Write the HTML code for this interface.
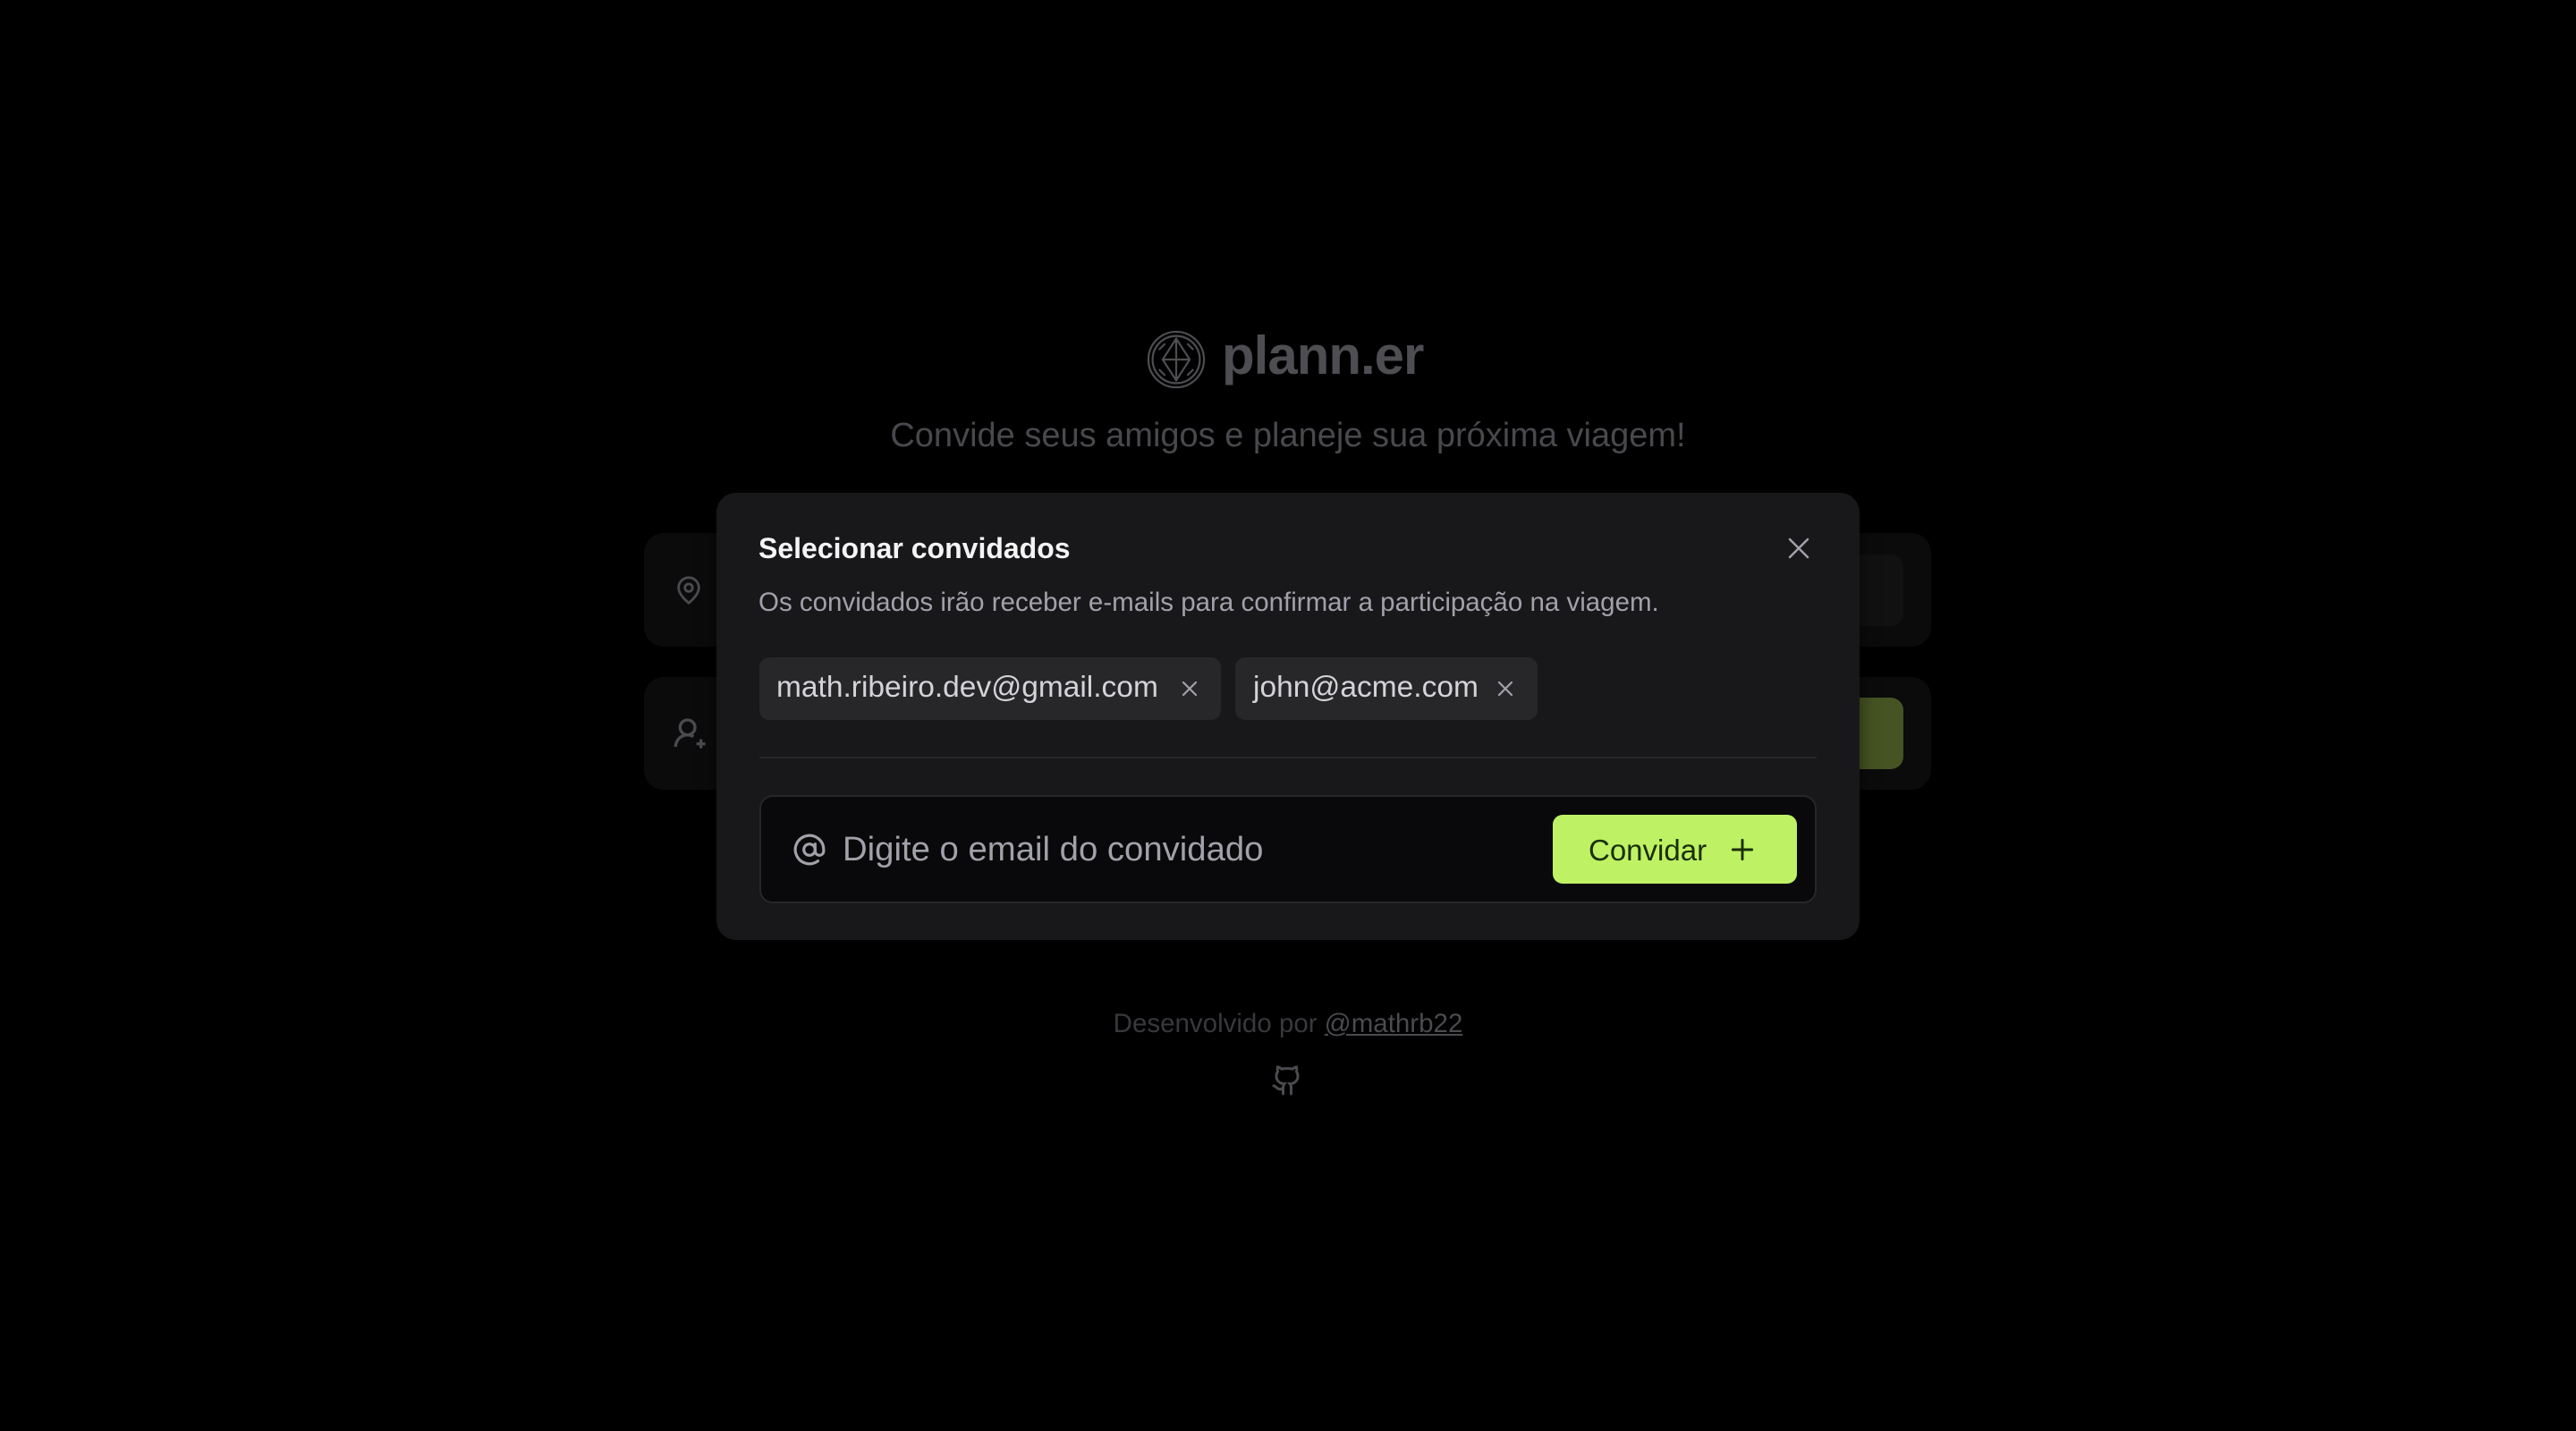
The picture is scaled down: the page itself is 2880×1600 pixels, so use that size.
<!DOCTYPE html>
<html><head><meta charset="utf-8"><style>
*{margin:0;padding:0;box-sizing:border-box}
body{width:2880px;height:1600px;background:#000;position:relative;overflow:hidden;font-family:"Liberation Sans",sans-serif}
.a{position:absolute}
</style></head><body>
<!-- background -->
<svg class="a" style="left:1282px;top:369px" width="66" height="66" viewBox="0 0 24 24" fill="none" stroke="#4d4d52" stroke-width="0.8">
<circle cx="12" cy="12" r="11.3"/><circle cx="12" cy="12" r="9.6"/>
<path d="M12 3.5L17.5 12L12 20.5L6.5 12Z M6.5 12H17.5 M12 3.5V20.5 M5 8L7.5 5.5 M19 8L16.5 5.5 M5 16L7.5 18.5 M19 16L16.5 18.5"/>
</svg>
<div class="a" style="left:1366px;top:363px;font-size:60px;font-weight:bold;color:#4d4d52;letter-spacing:-1px">plann.er</div>
<div class="a" style="left:0;width:2880px;top:466px;text-align:center;font-size:38px;color:#48484d">Convide seus amigos e planeje sua próxima viagem!</div>

<div class="a" style="left:720px;top:596px;width:1439px;height:127px;background:#0b0b0c;border-radius:22px"></div>
<div class="a" style="left:720px;top:757px;width:1439px;height:126px;background:#0b0b0c;border-radius:22px"></div>
<div class="a" style="left:2060px;top:620px;width:68px;height:80px;background:#111112;border-radius:14px"></div>
<div class="a" style="left:2060px;top:780px;width:68px;height:80px;background:#465323;border-radius:14px"></div>
<svg class="a" style="left:753px;top:640px" width="34" height="40" viewBox="0 0 24 24" fill="none" stroke="#4a4a4f" stroke-width="2"><path d="M20 10c0 6-8 12-8 12s-8-6-8-12a8 8 0 0 1 16 0Z"/><circle cx="12" cy="10" r="3"/></svg>
<svg class="a" style="left:752px;top:800px" width="40" height="40" viewBox="0 0 24 24" fill="none" stroke="#4a4a4f" stroke-width="2"><circle cx="10" cy="8" r="5"/><path d="M2 21a8 8 0 0 1 12-6.9 M19 16v6 M16 19h6"/></svg>

<div class="a" style="left:0;width:2880px;top:1128px;text-align:center;font-size:29.5px;color:#38383d">Desenvolvido por <span style="text-decoration:underline;color:#4a4a4f">@mathrb22</span></div>
<svg class="a" style="left:1421px;top:1190px" width="36" height="36" viewBox="0 0 24 24" fill="none" stroke="#4a4a4f" stroke-width="2" stroke-linecap="round"><path d="M15 22v-4a4.8 4.8 0 0 0-1-3.5c3 0 6-2 6-5.5.1-1.3-.3-2.5-1-3.5.3-1.2.3-2.4 0-3.5 0 0-1 0-3 1.5-2.6-.5-5.4-.5-8 0C6 2 5 2 5 2c-.3 1.1-.3 2.3 0 3.5A5.4 5.4 0 0 0 4 9c0 3.5 3 5.5 6 5.5-.4.5-.7 1.1-.8 1.7-.2.6-.2 1.200-.2 1.8v4 M9 18c-4.5 2-5-2-7-2"/></svg>

<!-- modal -->
<div class="a" style="left:801px;top:551px;width:1278px;height:500px;background:#18181b;border-radius:22px;box-shadow:0 0 20px rgba(0,0,0,.5)"></div>
<div class="a" style="left:848px;top:595px;font-size:32px;font-weight:bold;color:#f4f4f5">Selecionar convidados</div>
<svg class="a" style="left:1996px;top:598px" width="30" height="30" viewBox="0 0 24 24" fill="none" stroke="#a1a1aa" stroke-width="2" stroke-linecap="round"><path d="M4 4L20 20M20 4L4 20"/></svg>
<div class="a" style="left:848px;top:657px;font-size:29.5px;color:#a1a1aa">Os convidados irão receber e-mails para confirmar a participação na viagem.</div>

<div class="a" style="left:849px;top:735px;width:516px;height:70px;background:#27272a;border-radius:11px"></div>
<div class="a" style="left:868px;top:750px;font-size:33.5px;color:#d4d4d8">math.ribeiro.dev@gmail.com</div>
<svg class="a" style="left:1318px;top:758px" width="24" height="24" viewBox="0 0 24 24" fill="none" stroke="#a1a1aa" stroke-width="2.2" stroke-linecap="round"><path d="M5 5L19 19M19 5L5 19"/></svg>
<div class="a" style="left:1381px;top:735px;width:338px;height:70px;background:#27272a;border-radius:11px"></div>
<div class="a" style="left:1401px;top:750px;font-size:33.5px;color:#d4d4d8">john@acme.com</div>
<svg class="a" style="left:1671px;top:758px" width="24" height="24" viewBox="0 0 24 24" fill="none" stroke="#a1a1aa" stroke-width="2.2" stroke-linecap="round"><path d="M5 5L19 19M19 5L5 19"/></svg>

<div class="a" style="left:849px;top:846px;width:1182px;height:2px;background:#27272a"></div>

<div class="a" style="left:849px;top:889px;width:1182px;height:121px;background:#09090b;border:2px solid #27272a;border-radius:15px"></div>
<svg class="a" style="left:886px;top:931px" width="38" height="38" viewBox="0 0 24 24" fill="none" stroke="#a1a1aa" stroke-width="2" stroke-linecap="round"><circle cx="12" cy="12" r="4"/><path d="M16 8v5a3 3 0 0 0 6 0v-1a10 10 0 1 0-4 8"/></svg>
<div class="a" style="left:942px;top:928px;font-size:38.3px;color:#a1a1aa">Digite o email do convidado</div>
<div class="a" style="left:1736px;top:911px;width:273px;height:77px;background:#bef264;border-radius:11px"></div>
<div class="a" style="left:1776px;top:932px;font-size:33px;color:#1a2e05">Convidar</div>
<svg class="a" style="left:1932px;top:934px" width="32" height="32" viewBox="0 0 24 24" fill="none" stroke="#1a2e05" stroke-width="2.2" stroke-linecap="round"><path d="M12 4V20M4 12H20"/></svg>
</body></html>
